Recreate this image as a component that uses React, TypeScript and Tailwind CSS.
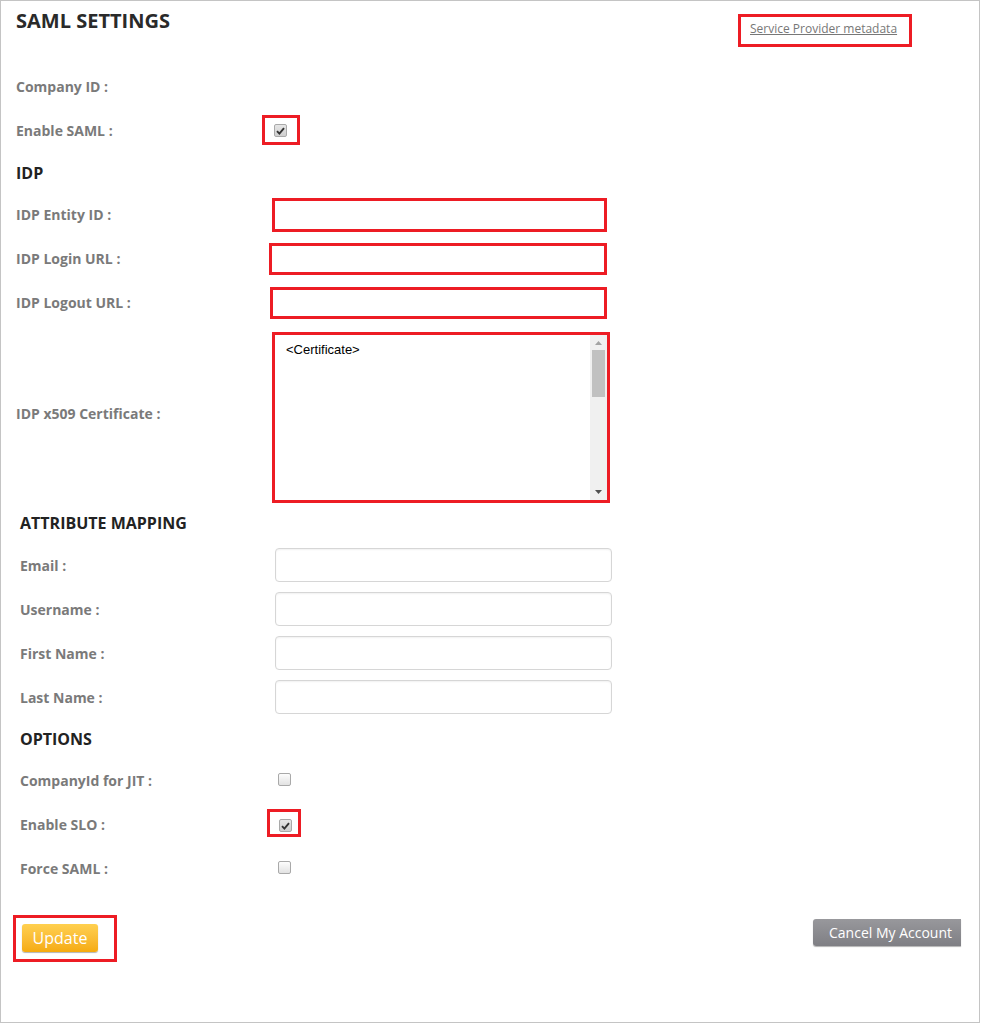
import React from "react";

const font = { fontFamily: '"Open Sans", "Liberation Sans", sans-serif' };

function Box({ checked }: { checked?: boolean }) {
  return (
    <div
      className={`w-[13px] h-[13px] rounded-[2px] border border-[#a9a9a9] bg-gradient-to-b flex items-center justify-center ${
        checked ? "from-[#e6e6e6] to-[#cfcfcf]" : "from-[#fdfdfd] to-[#e2e2e2]"
      }`}
    >
      {checked && (
        <svg width="9" height="8" viewBox="0 0 9 8">
          <path d="M1 4.2 L3.4 6.6 L8 1.2" stroke="#333" strokeWidth="1.9" fill="none" />
        </svg>
      )}
    </div>
  );
}

function Label({ children, w }: { children: React.ReactNode; w: string }) {
  return <div className={`${w} shrink-0 text-[14px] font-bold text-[#7a7a7a]`}>{children}</div>;
}

export default function App() {
  const redInputs = [
    { label: "IDP Entity ID :", cls: "ml-[10px] w-[335px] h-[34px]" },
    { label: "IDP Login URL :", cls: "ml-[7px] w-[338px] h-[32px]" },
    { label: "IDP Logout URL :", cls: "ml-[8px] w-[337px] h-[32px]" },
  ];
  const mapping = ["Email :", "Username :", "First Name :", "Last Name :"];
  const options = [
    { label: "CompanyId for JIT :", checked: false, red: false },
    { label: "Enable SLO :", checked: true, red: true },
    { label: "Force SAML :", checked: false, red: false },
  ];

  return (
    <div style={font} className="w-[980px] h-[1023px] border border-[#c4c4c4] bg-white overflow-hidden">
      {/* header */}
      <div className="h-[63px] flex justify-between pl-[15px] pr-[67px]">
        <h1 className="pt-[7px] text-[20px] leading-[26px] font-bold text-[#2a2a2a]">SAML SETTINGS</h1>
        <div className="mt-[13px] h-[33px] w-[174px] border-[3px] border-[#ed1c24] flex items-center pl-[9px] pb-[3px]">
          <a className="text-[12px] text-[#777] underline">Service Provider metadata</a>
        </div>
      </div>

      <div className="pl-[15px]">
        <div className="h-[44px] flex items-center">
          <Label w="w-[246px]">Company ID :</Label>
        </div>
        <div className="h-[44px] flex items-center">
          <Label w="w-[246px]">Enable SAML :</Label>
          <div className="w-[38px] h-[30px] border-[3px] border-[#ed1c24] pl-[9px] pt-[6px]">
            <Box checked />
          </div>
        </div>
        <div className="h-[41px] flex items-center">
          <h2 className="text-[16px] font-bold text-[#222]">IDP</h2>
        </div>
        {redInputs.map((r) => (
          <div key={r.label} className="h-[44px] flex items-center">
            <Label w="w-[246px]">
              <div className="-mt-[1px]">{r.label}</div>
            </Label>
            <div className={`${r.cls} border-[3px] border-[#ed1c24] bg-white`} />
          </div>
        ))}
        <div className="h-[177px] flex items-center pt-[7px]">
          <Label w="w-[246px]">
            <div className="mb-[8px]">IDP x509 Certificate :</div>
          </Label>
          <div className="ml-[10px] w-[338px] h-[171px] border-[3px] border-[#ed1c24] flex bg-white">
            <div className="flex-1 pl-[11px] pt-[7px] text-[13px] text-black leading-[16px]" style={{ fontFamily: '"Liberation Sans", Arial, sans-serif' }}>
              &lt;Certificate&gt;
            </div>
            <div className="w-[17px] bg-[#f0f0f0] flex flex-col items-center">
              <svg width="9" height="14" viewBox="0 0 9 14" className="mt-[1px]">
                <path d="M1 9 L4.5 5 L8 9 Z" fill="#a3a3a3" />
              </svg>
              <div className="w-[13px] h-[47px] bg-[#c1c1c1]" />
              <div className="flex-1" />
              <svg width="9" height="14" viewBox="0 0 9 14" className="mb-[1px]">
                <path d="M1 5 L4.5 9 L8 5 Z" fill="#505050" />
              </svg>
            </div>
          </div>
        </div>
      </div>

      <div className="pl-[19px]">
        <div className="h-[41px] flex items-center">
          <h2 className="text-[16px] font-bold text-[#222]">ATTRIBUTE MAPPING</h2>
        </div>
        {mapping.map((m) => (
          <div key={m} className="h-[44px] flex items-center">
            <Label w="w-[255px]">{m}</Label>
            <div className="w-[337px] h-[34px] rounded-[4px] border border-[#d6d6d6] shadow-[inset_0_1px_2px_rgba(0,0,0,0.06)] bg-white" />
          </div>
        ))}
        <div className="h-[39px] flex items-center">
          <h2 className="text-[16px] font-bold text-[#222]">OPTIONS</h2>
        </div>
        {options.map((o) => (
          <div key={o.label} className="h-[44px] flex items-center">
            <Label w="w-[256px]">{o.label}</Label>
            {o.red ? (
              <div className="-ml-[9px] w-[34px] h-[28px] border-[3px] border-[#ed1c24] pl-[9px] pt-[7px] -mt-[2px]">
                <Box checked={o.checked} />
              </div>
            ) : (
              <div className="ml-[2px] -mt-[2px]">
                <Box checked={o.checked} />
              </div>
            )}
          </div>
        ))}
      </div>

      <div className="flex items-start justify-between pl-[12px] pr-[18px] mt-[25px]">
        <div className="w-[104px] h-[47px] border-[3px] border-[#ed1c24] pl-[6px] pt-[6px]">
          <button className="w-[76px] h-[28px] rounded-[3px] bg-gradient-to-b from-[#ffd04f] to-[#f5ab0c] text-white text-[16px] leading-[28px] shadow-[0_1px_1px_rgba(0,0,0,0.3)]">
            Update
          </button>
        </div>
        <button className="mt-[4px] w-[148px] h-[27px] rounded-l-[3px] bg-gradient-to-b from-[#98989c] to-[#7f7f84] text-white text-[14px] leading-[26px] pl-[16px] text-left shadow-[0_1px_1px_rgba(0,0,0,0.3)]">
          Cancel My Account
        </button>
      </div>
    </div>
  );
}
